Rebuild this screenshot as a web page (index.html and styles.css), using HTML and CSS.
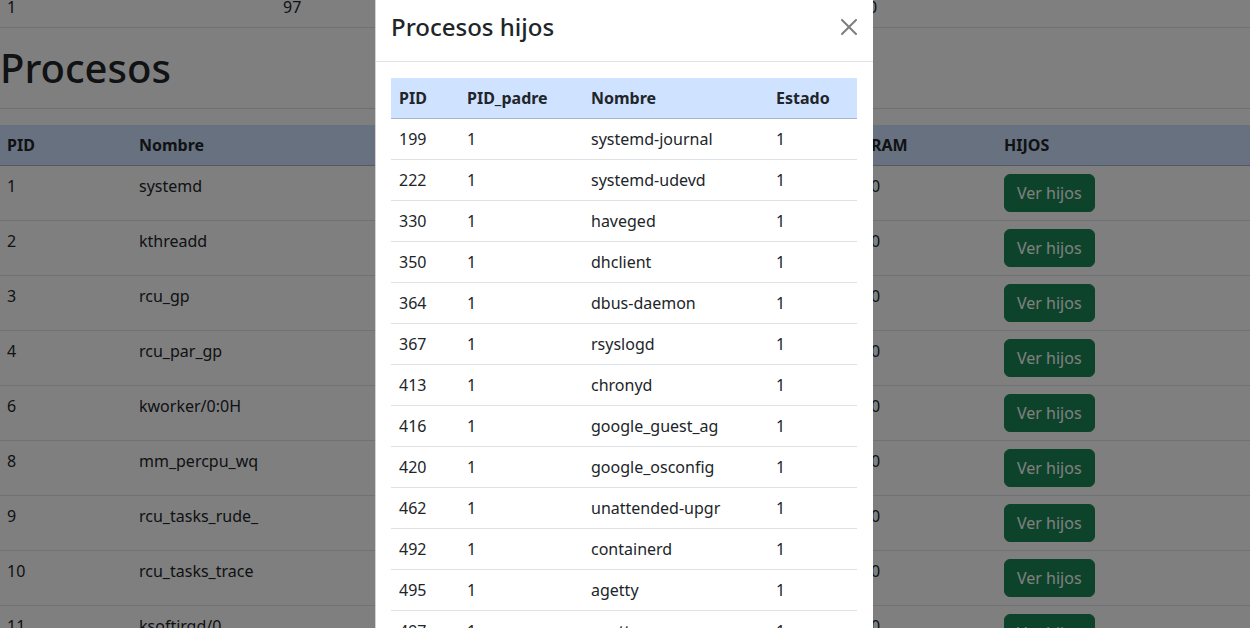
FILE: index.html
```html
<!DOCTYPE html>
<html lang="es">
<head>
<meta charset="utf-8">
<title>Procesos</title>
<link rel="stylesheet" href="styles.css">
</head>
<body>
<div class="page">
  <table class="table stats">
    <colgroup><col class="c-a"><col class="c-b"><col></colgroup>
    <tbody>
      <tr><td>1</td><td>97</td><td>0</td></tr>
    </tbody>
  </table>

  <h1 class="title">Procesos</h1>
  <hr class="rule">

  <table class="table procs">
    <colgroup>
      <col class="p-pid"><col class="p-nom"><col class="p-mid"><col class="p-ram"><col>
    </colgroup>
    <thead>
      <tr><th>PID</th><th>Nombre</th><th></th><th>RAM</th><th>HIJOS</th></tr>
    </thead>
    <tbody>
      <tr><td>1</td><td>systemd</td><td></td><td>0</td><td><button class="btn">Ver hijos</button></td></tr>
      <tr><td>2</td><td>kthreadd</td><td></td><td>0</td><td><button class="btn">Ver hijos</button></td></tr>
      <tr><td>3</td><td>rcu_gp</td><td></td><td>0</td><td><button class="btn">Ver hijos</button></td></tr>
      <tr><td>4</td><td>rcu_par_gp</td><td></td><td>0</td><td><button class="btn">Ver hijos</button></td></tr>
      <tr><td>6</td><td>kworker/0:0H</td><td></td><td>0</td><td><button class="btn">Ver hijos</button></td></tr>
      <tr><td>8</td><td>mm_percpu_wq</td><td></td><td>0</td><td><button class="btn">Ver hijos</button></td></tr>
      <tr><td>9</td><td>rcu_tasks_rude_</td><td></td><td>0</td><td><button class="btn">Ver hijos</button></td></tr>
      <tr><td>10</td><td>rcu_tasks_trace</td><td></td><td>0</td><td><button class="btn">Ver hijos</button></td></tr>
      <tr><td>11</td><td>ksoftirqd/0</td><td></td><td>0</td><td><button class="btn">Ver hijos</button></td></tr>
    </tbody>
  </table>
</div>

<div class="modal">
  <div class="modal-dialog">
    <div class="modal-content">
      <div class="modal-header">
        <h4 class="modal-title">Procesos hijos</h4>
        <button class="btn-close" aria-label="Cerrar">
          <svg viewBox="0 0 16 16" width="16" height="16"><path d="M.293.293a1 1 0 0 1 1.414 0L8 6.586 14.293.293a1 1 0 1 1 1.414 1.414L9.414 8l6.293 6.293a1 1 0 0 1-1.414 1.414L8 9.414l-6.293 6.293a1 1 0 0 1-1.414-1.414L6.586 8 .293 1.707a1 1 0 0 1 0-1.414z"/></svg>
        </button>
      </div>
      <div class="modal-body">
        <table class="table kids">
          <colgroup><col class="k-pid"><col class="k-pp"><col class="k-nom"><col></colgroup>
          <thead>
            <tr><th>PID</th><th>PID_padre</th><th>Nombre</th><th>Estado</th></tr>
          </thead>
          <tbody>
            <tr><td>199</td><td>1</td><td>systemd-journal</td><td>1</td></tr>
            <tr><td>222</td><td>1</td><td>systemd-udevd</td><td>1</td></tr>
            <tr><td>330</td><td>1</td><td>haveged</td><td>1</td></tr>
            <tr><td>350</td><td>1</td><td>dhclient</td><td>1</td></tr>
            <tr><td>364</td><td>1</td><td>dbus-daemon</td><td>1</td></tr>
            <tr><td>367</td><td>1</td><td>rsyslogd</td><td>1</td></tr>
            <tr><td>413</td><td>1</td><td>chronyd</td><td>1</td></tr>
            <tr><td>416</td><td>1</td><td>google_guest_ag</td><td>1</td></tr>
            <tr><td>420</td><td>1</td><td>google_osconfig</td><td>1</td></tr>
            <tr><td>462</td><td>1</td><td>unattended-upgr</td><td>1</td></tr>
            <tr><td>492</td><td>1</td><td>containerd</td><td>1</td></tr>
            <tr><td>495</td><td>1</td><td>agetty</td><td>1</td></tr>
            <tr><td>497</td><td>1</td><td>agetty</td><td>1</td></tr>
          </tbody>
        </table>
      </div>
    </div>
  </div>
</div>
</body>
</html>
```

FILE: styles.css
```css
* { box-sizing: border-box; }

html, body {
  margin: 0;
  height: 100%;
  overflow: hidden;
}

body {
  font-family: "Noto Sans", "Open Sans", sans-serif;
  font-size: 16px;
  line-height: 1.5;
  color: #212529;
  background: #fff;
}

.page {
  margin-top: -13px;
}

.table {
  width: 100%;
  border-collapse: collapse;
  table-layout: fixed;
  margin-bottom: 16px;
  vertical-align: top;
}

.table th,
.table td {
  padding: 8px 8px 8px 7px;
  text-align: left;
  vertical-align: top;
  border-bottom: 1px solid #dee2e6;
  white-space: nowrap;
  overflow: hidden;
}

.table th {
  font-weight: 700;
}

.table thead th {
  background: #cfe2ff;
  border-bottom-color: #a6b5cc;
}

.c-a { width: 276px; }
.c-b { width: 585px; }

.title {
  font-size: 40px;
  font-weight: 500;
  line-height: 1.2;
  margin: 0 0 8px;
}

.rule {
  margin: 16px 0;
  border: 0;
  border-top: 1px solid currentColor;
  opacity: 0.25;
}

.p-pid { width: 132px; }
.p-nom { width: 300px; }
.p-mid { width: 432px; }
.p-ram { width: 133px; }

.btn {
  font-family: inherit;
  font-size: 16px;
  line-height: 1.5;
  padding: 6px 12px;
  border: 1px solid #198754;
  border-radius: 6px;
  background: #198754;
  color: #fff;
  cursor: pointer;
}

/* Modal */
.modal {
  position: fixed;
  inset: 0;
  background: rgba(0, 0, 0, 0.5);
  overflow: hidden;
  display: flex;
  justify-content: center;
  align-items: flex-start;
  padding-right: 2px;
}

.modal-dialog {
  width: 498px;
  margin-top: -7px;
}

.modal-content {
  background: #fff;
  border-left: 1px solid rgba(0, 0, 0, 0.175);
}

.modal-header {
  display: flex;
  align-items: center;
  justify-content: space-between;
  padding: 16px 16px 16px 15px;
  border-bottom: 1px solid #dee2e6;
}

.modal-title {
  margin: 0;
  font-size: 24px;
  font-weight: 500;
  line-height: 1.5;
}

.btn-close {
  width: 16px;
  height: 16px;
  padding: 0;
  border: 0;
  background: transparent;
  opacity: 0.5;
  display: block;
}

.btn-close svg {
  display: block;
  fill: #000;
}

.modal-body {
  padding: 16px 16px 16px 15px;
}

.kids th,
.kids td {
  padding-left: 8px;
}

.k-pid { width: 68px; }
.k-pp { width: 124px; }
.k-nom { width: 185px; }
```
